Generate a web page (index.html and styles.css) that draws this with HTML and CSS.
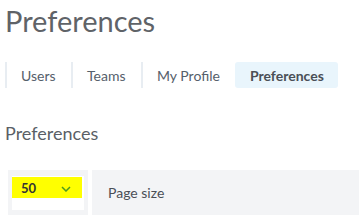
FILE: index.html
```html
<!DOCTYPE html>
<html>
<head>
<meta charset="utf-8">
<link rel="stylesheet" href="styles.css">
</head>
<body>
<div class="page">
  <h1 class="title">Preferences</h1>
  <nav class="tabs">
    <a class="tab">Users</a>
    <a class="tab">Teams</a>
    <a class="tab">My Profile</a>
    <a class="tab active">Preferences</a>
  </nav>
  <h2 class="section">Preferences</h2>
  <div class="pref-row">
    <div class="cell select-cell">
      <div class="select">
        <span class="hl"><span class="value">50</span><svg class="chev" width="10" height="6" viewBox="0 0 10 6"><path d="M1 1 L5 5 L9 1" fill="none" stroke="#4d9a1e" stroke-width="1.5"/></svg></span>
      </div>
    </div>
    <div class="cell label-cell">Page size</div>
  </div>
</div>
</body>
</html>
```
FILE: styles.css
```css
html, body {
  margin: 0;
  padding: 0;
  background: #ffffff;
}
body {
  font-family: Lato, "Open Sans", sans-serif;
}
.page {
  padding: 3px 0 0 5px;
}
.title {
  margin: 0;
  font-size: 29px;
  line-height: 36px;
  font-weight: 400;
  color: #5f6368;
}
.tabs {
  display: flex;
  margin-top: 23px;
  height: 26px;
}
.tab {
  display: flex;
  flex-shrink: 0;
  align-items: center;
  white-space: nowrap;
  padding: 0 15.5px 0 14px;
  border-left: 2px solid #e8edf2;
  font-size: 14px;
  color: #56606b;
}
.tab.active {
  border-left: none;
  padding: 0 14.5px;
  background: #e9f5fc;
  border-radius: 3px;
  font-weight: 700;
  color: #4a4f56;
}
.section {
  margin: 34px 0 0 0;
  font-size: 18px;
  line-height: 22px;
  font-weight: 400;
  color: #5a5f66;
}
.pref-row {
  display: flex;
  gap: 4px;
  margin: 26px 0 0 3px;
  height: 45px;
}
.cell {
  background: #f3f4f6;
}
.select-cell {
  width: 72px;
  padding: 6px 4px 4px 4px;
}
.select {
  background: #ffffff;
  height: 34px;
}
.hl {
  display: flex;
  align-items: center;
  background: #ffff00;
  height: 21px;
  width: 70px;
  padding-left: 9px;
  box-sizing: border-box;
  transform: translateY(1px);
}
.value {
  font-size: 13px;
  font-weight: 700;
  color: #333333;
  width: 40px;
}
.chev {
  margin-top: 2px;
}
.label-cell {
  flex: 1;
  display: flex;
  align-items: center;
  padding-left: 16px;
  font-size: 14px;
  color: #4a4f56;
}
```
